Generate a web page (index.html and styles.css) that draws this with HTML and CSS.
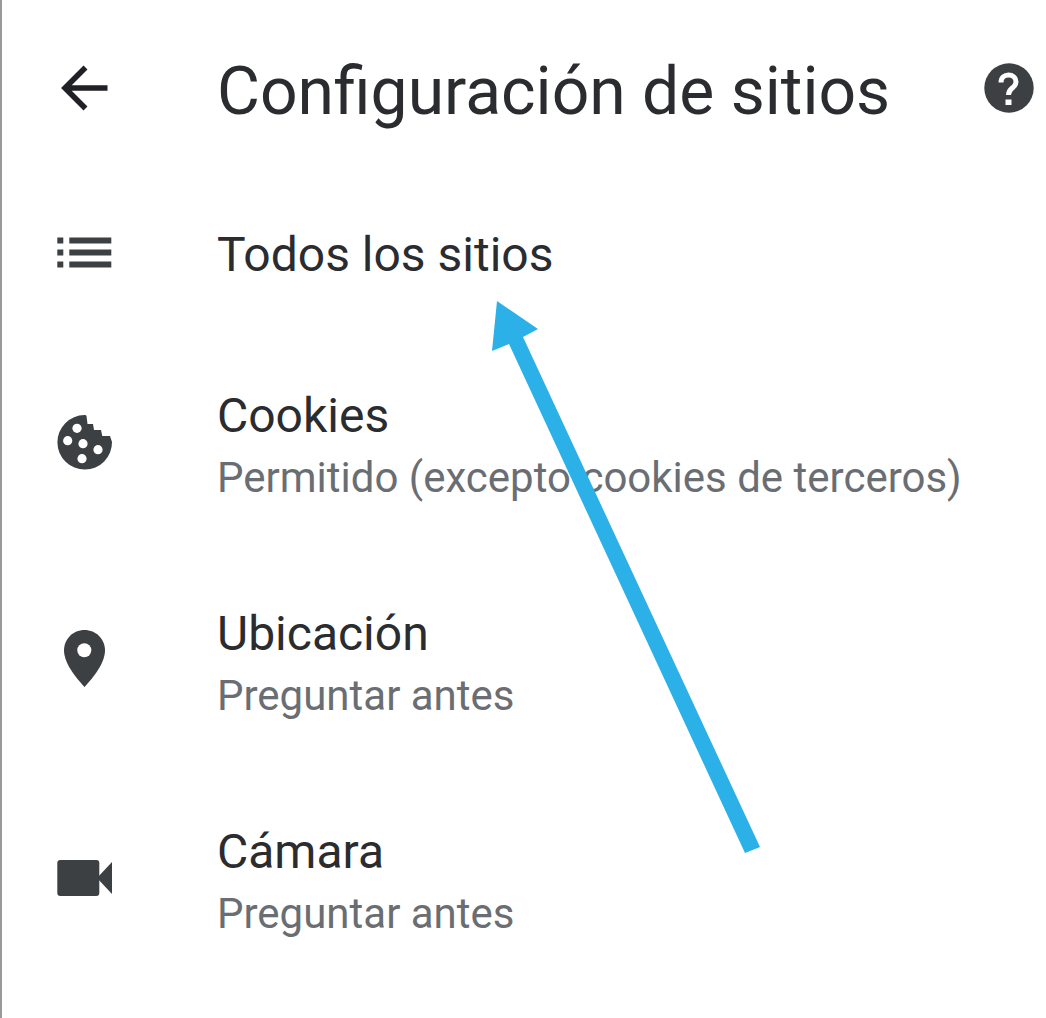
FILE: index.html
```html
<!DOCTYPE html>
<html lang="es">
<head>
  <meta charset="UTF-8" />
  <title>Configuración de sitios</title>
  <link rel="stylesheet" href="styles.css">
</head>
<body>
  <div class="screen">
    <header class="toolbar">
      <div class="icon-col">
        <svg class="icon" viewBox="0 0 60 60" width="60" height="60">
          <path d="M52.500 30H11.500M30.500 9.500 10 30 30.500 50.500" fill="none" stroke="#202124" stroke-width="5.600"/>
        </svg>
      </div>
      <h1 class="title">Configuración de sitios</h1>
      <svg class="help" viewBox="0 0 50 50" width="50" height="50">
        <circle cx="25" cy="25" r="24.700" fill="#3c4043"/>
        <path d="M17 19.500c0-5 3.500-7.500 7.500-7.500s7.500 2.500 7.500 7c0 3-2 4.500-3.500 5.800-2 1.600-4 3-4 7.200" fill="none" stroke="#fff" stroke-width="5"/>
        <rect x="21.500" y="36.500" width="6" height="5.500" fill="#fff"/>
      </svg>
    </header>

    <ul class="list">
      <li class="row row-single">
        <div class="icon-col">
          <svg class="icon" viewBox="0 0 60 60" width="60" height="60" fill="#3c4043">
            <rect x="2.300" y="12.500" width="6" height="6"/><rect x="2.300" y="24.500" width="6" height="6"/><rect x="2.300" y="36.500" width="6" height="6"/>
            <rect x="14.300" y="12.500" width="42" height="6"/><rect x="14.300" y="24.500" width="42" height="6"/><rect x="14.300" y="36.500" width="42" height="6"/>
          </svg>
        </div>
        <div class="row-text">
          <div class="row-title">Todos los sitios</div>
        </div>
      </li>
      <li class="row">
        <div class="icon-col">
          <svg class="icon" viewBox="0 0 60 60" width="60" height="60">
            <path d="M29.500 3c.9 0 1.700.3 2 1L32.500 12H38L39 18H46L47.300 24H55L57 30A27.300 27.300 0 1 1 29.500 3z" fill="#3c4043"/>
            <circle cx="22" cy="16.300" r="4.600" fill="#fff"/><circle cx="12.700" cy="28.700" r="4.600" fill="#fff"/>
            <circle cx="28" cy="31.700" r="4.600" fill="#fff"/><circle cx="43" cy="37.700" r="4.600" fill="#fff"/>
            <circle cx="27" cy="46.700" r="4.600" fill="#fff"/>
          </svg>
        </div>
        <div class="row-text">
          <div class="row-title">Cookies</div>
          <div class="row-sub">Permitido (excepto cookies de terceros)</div>
        </div>
      </li>
      <li class="row">
        <div class="icon-col">
          <svg class="icon" viewBox="0 0 60 60" width="60" height="60">
            <path d="M29.500 0C18 0 9 9 9 20.500 9 33 21 48 29.500 57 38 48 50 33 50 20.500 50 9 41 0 29.500 0z" fill="#3c4043"/>
            <circle cx="29.300" cy="20.300" r="7" fill="#fff"/>
          </svg>
        </div>
        <div class="row-text">
          <div class="row-title">Ubicación</div>
          <div class="row-sub">Preguntar antes</div>
        </div>
      </li>
      <li class="row">
        <div class="icon-col">
          <svg class="icon" viewBox="0 0 60 60" width="60" height="60" fill="#3c4043">
            <rect x="2.300" y="12" width="42" height="36" rx="3"/>
            <path d="M42 30 57 14v32z"/>
          </svg>
        </div>
        <div class="row-text">
          <div class="row-title">Cámara</div>
          <div class="row-sub">Preguntar antes</div>
        </div>
      </li>
    </ul>

    <!-- flecha azul dibujada encima de la captura -->
    <svg class="callout" viewBox="0 0 1046 1018" width="1046" height="1018">
      <path d="M497 301 538 329 523 337 760 847 745 853 509 344 492 351z" fill="#2cb0e8"/>
    </svg>
  </div>
</body>
</html>
```

FILE: styles.css
```css
html, body {
  margin: 0;
  padding: 0;
  background-color: #fff;
}
body {
  font-family: Roboto, "Liberation Sans", sans-serif;
  color: #2a2c2f;
}
.screen {
  position: relative;
  width: 1046px;
  height: 1018px;
  box-sizing: border-box;
  border-left: 2px solid #999;
  overflow: hidden;
}
.toolbar {
  display: flex;
  align-items: center;
  height: 176px;
}
.icon-col {
  width: 215px;
  flex-shrink: 0;
  padding-left: 53px;
  box-sizing: border-box;
}
.icon {
  display: block;
}
.title {
  flex: 1;
  margin: 8px 0 0;
  font-size: 66px;
  font-weight: 400;
  line-height: 70px;
}
.help {
  display: block;
  margin-right: 12px;
}
.list {
  list-style: none;
  margin: 0;
  padding: 0;
}
.row {
  display: flex;
  align-items: center;
  height: 218px;
}
.row-single {
  height: 157px;
}
.row-text {
  padding-top: 10px;
}
.row-single .row-text {
  padding-top: 0;
}
.row-title {
  font-size: 48px;
  line-height: 62px;
}
.row-sub {
  font-size: 42px;
  line-height: 62px;
  color: #6a6e72;
}
.callout {
  position: absolute;
  top: 0;
  left: -2px;
}
```
